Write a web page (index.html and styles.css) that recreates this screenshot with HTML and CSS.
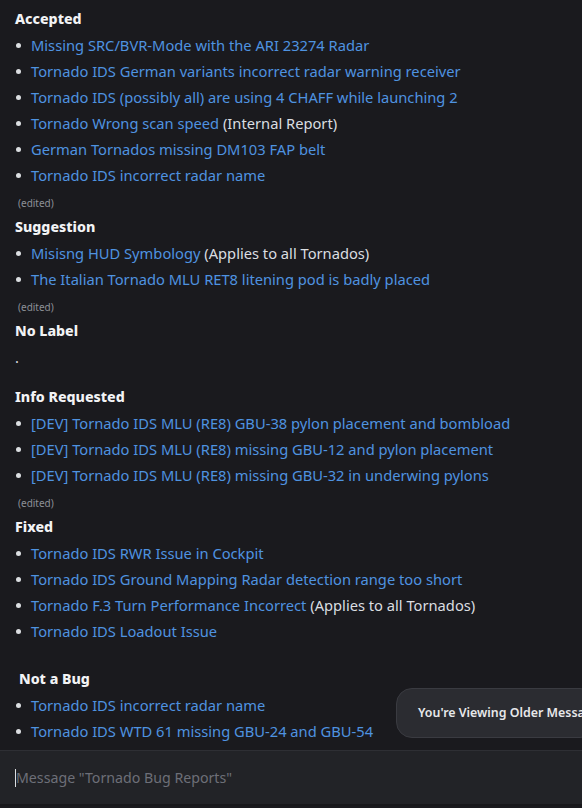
FILE: index.html
```html
<!DOCTYPE html>
<html lang="en">
<head>
    <meta charset="UTF-8">
    <title>Tornado Bug Reports</title>
    <link rel="stylesheet" href="styles.css">
</head>
<body>
    <div class="chat">
        <div class="messages">
            <div class="section">
                <div class="heading">Accepted</div>
                <ul class="list">
                    <li><a href="#">Missing SRC/BVR-Mode with the ARI 23274 Radar</a></li>
                    <li><a href="#">Tornado IDS German variants incorrect radar warning receiver</a></li>
                    <li><a href="#">Tornado IDS (possibly all) are using 4 CHAFF while launching 2</a></li>
                    <li><a href="#">Tornado Wrong scan speed</a> (Internal Report)</li>
                    <li><a href="#">German Tornados missing DM103 FAP belt</a></li>
                    <li><a href="#">Tornado IDS incorrect radar name</a></li>
                </ul>
                <div class="edited">(edited)</div>
            </div>

            <div class="section">
                <div class="heading">Suggestion</div>
                <ul class="list">
                    <li><a href="#">Misisng HUD Symbology</a> (Applies to all Tornados)</li>
                    <li><a href="#">The Italian Tornado MLU RET8 litening pod is badly placed</a></li>
                </ul>
                <div class="edited">(edited)</div>
            </div>

            <div class="section">
                <div class="heading">No Label</div>
                <div class="line">.</div>
            </div>

            <div class="section gap-small">
                <div class="heading">Info Requested</div>
                <ul class="list">
                    <li><a href="#">[DEV] Tornado IDS MLU (RE8) GBU-38 pylon placement and bombload</a></li>
                    <li><a href="#">[DEV] Tornado IDS MLU (RE8) missing GBU-12 and pylon placement</a></li>
                    <li><a href="#">[DEV] Tornado IDS MLU (RE8) missing GBU-32 in underwing pylons</a></li>
                </ul>
                <div class="edited">(edited)</div>
            </div>

            <div class="section">
                <div class="heading">Fixed</div>
                <ul class="list">
                    <li><a href="#">Tornado IDS RWR Issue in Cockpit</a></li>
                    <li><a href="#">Tornado IDS Ground Mapping Radar detection range too short</a></li>
                    <li><a href="#">Tornado F.3 Turn Performance Incorrect</a> (Applies to all Tornados)</li>
                    <li><a href="#">Tornado IDS Loadout Issue</a></li>
                </ul>
            </div>

            <div class="section gap-large">
                <div class="heading indent">Not a Bug</div>
                <ul class="list">
                    <li><a href="#">Tornado IDS incorrect radar name</a></li>
                    <li><a href="#">Tornado IDS WTD 61 missing GBU-24 and GBU-54</a></li>
                </ul>
            </div>

            <div class="older-toast">You're Viewing Older Messa</div>
        </div>

        <div class="composer">
            <span class="caret"></span>
            <span class="placeholder">Message "Tornado Bug Reports"</span>
        </div>
    </div>
</body>
</html>
```

FILE: styles.css
```css
* {
    margin: 0;
    padding: 0;
    box-sizing: border-box;
}

body {
    background: #1a1a1e;
    font-family: "Noto Sans", "Open Sans", Arial, sans-serif;
    font-size: 14.7px;
    color: #dbdee1;
    height: 808px;
    overflow: hidden;
}

.chat {
    display: flex;
    flex-direction: column;
    height: 808px;
}

.messages {
    position: relative;
    height: 750px;
    padding: 7px 0 0 15px;
    overflow: hidden;
}

.heading {
    height: 26px;
    line-height: 26px;
    font-size: 14.2px;
    font-weight: 800;
    color: #f2f3f5;
}

.heading.indent {
    padding-left: 4px;
}

.section:first-child .heading {
    margin-top: -1px;
}

.gap-small {
    margin-top: 14px;
}

.gap-large {
    margin-top: 22px;
}

.list {
    list-style: none;
}

.list li {
    position: relative;
    height: 26px;
    line-height: 26px;
    padding-left: 16px;
    white-space: nowrap;
}

.list li::before {
    content: "";
    position: absolute;
    left: 1px;
    top: 11px;
    width: 5px;
    height: 5px;
    border-radius: 50%;
    background: #dbdee1;
}

.list a {
    color: #4f93e0;
    text-decoration: none;
}

.line {
    height: 26px;
    line-height: 26px;
}

.edited {
    height: 26px;
    line-height: 30px;
    padding-left: 3px;
    font-size: 10px;
    color: #8d9097;
}

.older-toast {
    position: absolute;
    left: 396px;
    top: 688px;
    width: 200px;
    height: 50px;
    padding: 0 0 0 21px;
    line-height: 48px;
    border: 1px solid #3a3b41;
    border-radius: 16px;
    background: #2b2c31;
    color: #e7e8ea;
    font-size: 12.4px;
    font-weight: 600;
    white-space: nowrap;
    overflow: hidden;
}

.composer {
    display: flex;
    align-items: center;
    height: 56px;
    padding-left: 15px;
    background: #222327;
    border-top: 1px solid #2e2f34;
    border-bottom: 2px solid #18181b;
}

.caret {
    width: 1px;
    height: 18px;
    background: #dbdee1;
}

.placeholder {
    color: #6d6f78;
    font-size: 14.2px;
}
```
